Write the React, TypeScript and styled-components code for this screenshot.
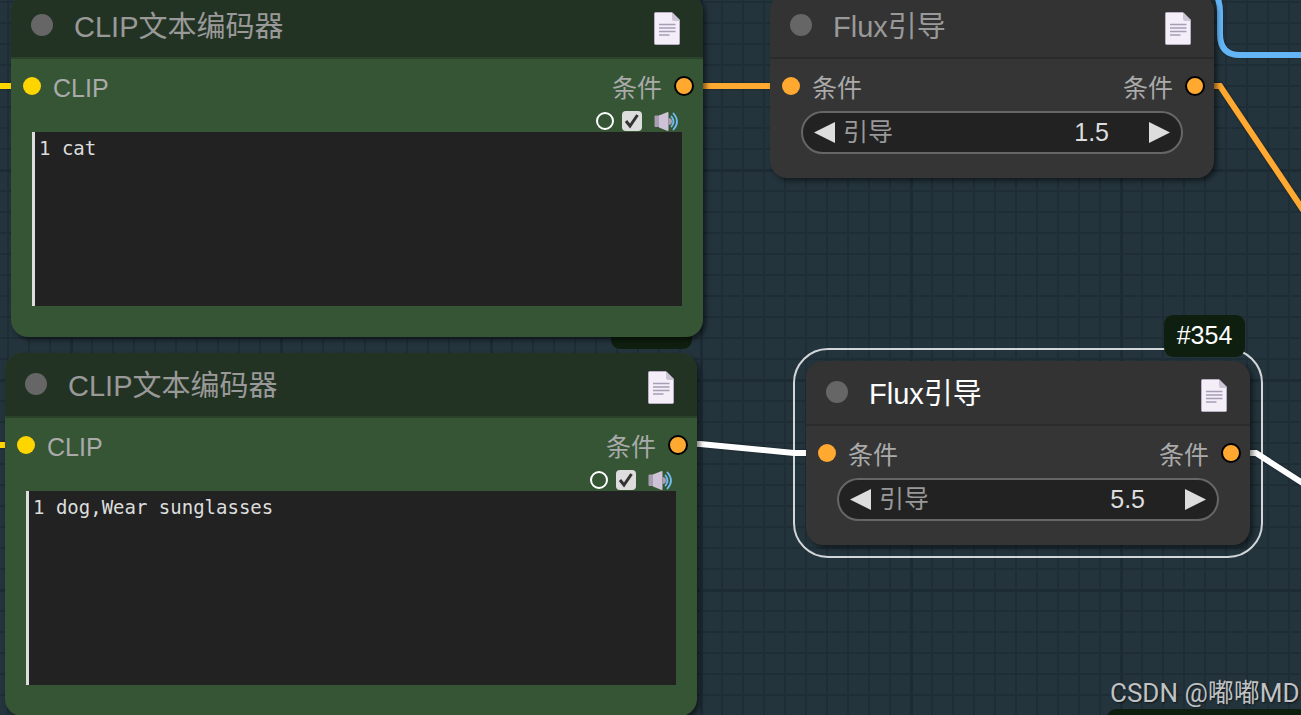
import React, { useId, useState } from "react";
import styled, { createGlobalStyle, css } from "styled-components";

const GlobalStyle = createGlobalStyle`
  *, *::before, *::after { box-sizing: border-box; }
  body {
    margin: 0;
    background: #24333d;
    font-family: "Liberation Sans", "Noto Sans CJK SC", sans-serif;
  }
  button, input, textarea { font: inherit; margin: 0; }
`;

const Canvas = styled.main`
  position: relative;
  min-height: 100vh;
  overflow: hidden;
  background-color: #24343d;
  background-image:
    linear-gradient(90deg, #1c2b34 3px, transparent 3px),
    linear-gradient(#1c2b34 3px, transparent 3px),
    linear-gradient(90deg, #1e2d36 2px, transparent 2px),
    linear-gradient(#1e2d36 2px, transparent 2px);
  background-size: 210px 210px, 210px 210px, 21px 21px, 21px 21px;
  background-position: 70px 0, 0 169px, 7px 0, 0 1px;
`;

const Wires = styled.svg`
  position: absolute;
  inset: 0;
  width: 100%;
  height: 100%;
  fill: none;
  stroke-width: 6px;
  filter: drop-shadow(0 0 1px rgba(0, 0, 0, 0.4));
`;

type Tone = "green" | "gray";

const tones = {
  green: { head: "#233323", body: "#355535", line: "#2b432b" },
  gray: { head: "#333333", body: "#353535", line: "#2b2b2b" },
};

const NodeBox = styled.section<{ $x: number; $y: number; $w: number; $tone: Tone; $selected?: boolean; $raised?: boolean }>`
  position: absolute;
  left: ${(p) => p.$x}px;
  top: ${(p) => p.$y}px;
  width: ${(p) => p.$w}px;
  z-index: ${(p) => (p.$raised ? 2 : 1)};
  border-radius: 17px;
  background: ${(p) => tones[p.$tone].body};
  box-shadow: 3px 3px 5px rgba(0, 0, 0, 0.5);
  ${(p) =>
    p.$selected &&
    css`
      &::before {
        content: "";
        position: absolute;
        inset: -13px;
        border: 2px solid rgba(255, 255, 255, 0.8);
        border-radius: 35px;
        pointer-events: none;
      }
    `}
`;

const Header = styled.header<{ $tone: Tone }>`
  display: flex;
  align-items: center;
  gap: 21px;
  height: 65px;
  padding: 0 23px 1px 20px;
  border-radius: 17px 17px 0 0;
  border-bottom: 2px solid ${(p) => tones[p.$tone].line};
  background: ${(p) => tones[p.$tone].head};
`;

const CollapseDot = styled.button`
  width: 22px;
  height: 22px;
  padding: 0;
  border: 0;
  border-radius: 50%;
  background: #666;
`;

const Title = styled.h2<{ $selected?: boolean }>`
  flex: 1;
  margin: 0;
  padding-top: 3px;
  font-size: 29px;
  line-height: 40px;
  font-weight: 400;
  color: ${(p) => (p.$selected ? "#fff" : "#999")};
`;

const IconButton = styled.button`
  display: flex;
  padding: 0;
  border: 0;
  background: none;
`;

const DocButton = styled(IconButton)`
  padding-top: 6px;
`;

const Badge = styled.span<{ $width?: number }>`
  display: flex;
  align-items: center;
  justify-content: center;
  width: ${(p) => p.$width ?? 81}px;
  height: 42px;
  padding-bottom: 2px;
  border-radius: 9px;
  background: #0f1f0f;
  color: #fff;
  font-size: 25px;
  line-height: 30px;
`;

const NodeBadge = styled(Badge)`
  position: absolute;
  right: 5px;
  top: -46px;
`;

const EdgeBadge = styled(Badge)`
  position: absolute;
  left: 1107px;
  top: 709px;
`;

const Slots = styled.div`
  display: flex;
  align-items: center;
  justify-content: space-between;
  height: 49px;
  padding: 5px 9px 0 12px;
`;

const Slot = styled.div`
  display: flex;
  align-items: center;
  gap: 12px;
  color: #aaa;
  font-size: 25px;
  line-height: 30px;
`;

const SlotName = styled.span`
  padding-top: 4px;
`;

const Port = styled.i<{ $color: string; $out?: boolean }>`
  width: ${(p) => (p.$out ? 20 : 18)}px;
  height: ${(p) => (p.$out ? 20 : 18)}px;
  border: ${(p) => (p.$out ? "2px solid #000" : "0")};
  border-radius: 50%;
  background: ${(p) => p.$color};
`;

const PromptBody = styled.div`
  padding: 0 21px 31px;
`;

const Tools = styled.div`
  display: flex;
  align-items: center;
  justify-content: flex-end;
  gap: 8px;
  height: 24px;
  padding: 1px 3px 0 0;
`;

const Radio = styled.input`
  appearance: none;
  width: 18px;
  height: 18px;
  border: 2px solid #fff;
  border-radius: 50%;
`;

const Tick = styled.label`
  display: grid;
  width: 20px;
  height: 20px;
  & > * {
    grid-area: 1 / 1;
  }
`;

const TickInput = styled.input`
  appearance: none;
  width: 20px;
  height: 20px;
  border-radius: 4px;
  background: #ddd;
  &:not(:checked) + svg {
    visibility: hidden;
  }
`;

const Prompt = styled.textarea<{ $height: number }>`
  display: block;
  width: 100%;
  height: ${(p) => p.$height}px;
  padding: 4px;
  border: 0;
  border-left: 3px solid #ddd;
  outline: 0;
  resize: none;
  background: #222;
  color: #ddd;
  font-family: "DejaVu Sans Mono", "Noto Sans CJK SC", monospace;
  font-size: 19px;
  line-height: 24px;
`;

const WidgetBody = styled.div`
  padding: 3px 31px 24px;
`;

const NumberWidget = styled.div`
  display: flex;
  align-items: center;
  height: 43px;
  padding: 0 11px;
  border: 2px solid #666;
  border-radius: 22px;
  background: #222;
  font-size: 25px;
  line-height: 30px;
`;

const WidgetLabel = styled.label`
  padding: 0 0 2px 8px;
  color: #999;
`;

const WidgetValue = styled.input`
  flex: 1;
  min-width: 0;
  padding: 0 0 2px;
  margin-right: 40px;
  border: 0;
  outline: 0;
  background: none;
  color: #ddd;
  text-align: right;
`;

const Watermark = styled.p`
  position: absolute;
  left: 1110px;
  top: 677px;
  z-index: 3;
  margin: 0;
  white-space: nowrap;
  color: #c0c2c4;
  font-family: Roboto, "Noto Sans CJK SC", sans-serif;
  font-size: 26px;
  line-height: 32px;
  text-shadow: 1px 1px 2px rgba(0, 0, 0, 0.6);
`;

const DocIcon = () => (
  <svg width="26" height="33" viewBox="0 0 26 33" aria-hidden="true">
    <path d="M1.5.5H18L25.500 8V31.500a1 1 0 0 1-1 1h-23a1 1 0 0 1-1-1V1.500a1 1 0 0 1 1-1Z" fill="#f3eef8" stroke="#b9afc4" />
    <path d="M18 .5 25.500 8v1H20a2 2 0 0 1-2-2Z" fill="#cdc4d6" />
    <path d="M5 12.500h16.500M5 16h16.500M5 19.500h16.500M5 23h10.500" stroke="#a79db5" strokeWidth="1.500" />
  </svg>
);

const SpeakerIcon = () => (
  <svg width="29" height="20" viewBox="0 0 29 20" fill="none" aria-hidden="true">
    <path d="M5.500 4.500H10v11.500H5.500a1 1 0 0 1-1-1v-9.500a1 1 0 0 1 1-1Z" fill="#a99db3" />
    <path d="M9 4.500 17 1.200a1 1 0 0 1 1.500 1v16.600a1 1 0 0 1-1.500 1L9 16.500Z" fill="#cdc2d6" />
    <path d="M18.500 7a3.500 3.500 0 0 1 0 7Z" fill="#a99db3" />
    <path d="M21.500 5.500q4 5 0 10" stroke="#6fbcf0" strokeWidth="1.800" strokeLinecap="round" />
    <path d="M23.500 2.500q7 8 0 16" stroke="#6fbcf0" strokeWidth="1.800" strokeLinecap="round" />
  </svg>
);

const CheckMark = () => (
  <svg width="20" height="20" viewBox="0 0 20 20" fill="none" aria-hidden="true">
    <path d="m4 10 4 5 7.500-11" stroke="#333" strokeWidth="3" />
  </svg>
);

const Arrow = ({ right }: { right?: boolean }) => (
  <svg width="21" height="21" viewBox="0 0 21 21" fill="#ddd" aria-hidden="true">
    <path d={right ? "M0 0 21 10.500 0 21Z" : "M21 0 0 10.500 21 21Z"} />
  </svg>
);

const ORANGE = "#ffa931";
const YELLOW = "#ffd500";

interface HeadProps {
  tone: Tone;
  title: string;
  selected?: boolean;
}

const NodeHeader = ({ tone, title, selected }: HeadProps) => (
  <Header $tone={tone}>
    <CollapseDot type="button" aria-label="折叠" />
    <Title $selected={selected}>{title}</Title>
    <DocButton type="button" aria-label="文档">
      <DocIcon />
    </DocButton>
  </Header>
);

const SlotRow = ({ input, color }: { input: string; color: string }) => (
  <Slots>
    <Slot>
      <Port $color={color} />
      <SlotName>{input}</SlotName>
    </Slot>
    <Slot>
      <SlotName>条件</SlotName>
      <Port $color={ORANGE} $out />
    </Slot>
  </Slots>
);

interface PromptNodeProps {
  x: number;
  y: number;
  text: string;
  height: number;
  raised?: boolean;
}

const PromptNode = ({ x, y, text, height, raised }: PromptNodeProps) => {
  const [value, setValue] = useState(text);
  return (
    <NodeBox $x={x} $y={y} $w={692} $tone="green" $raised={raised}>
      {!raised && <NodeBadge />}
      <NodeHeader tone="green" title="CLIP文本编码器" />
      <SlotRow input="CLIP" color={YELLOW} />
      <PromptBody>
        <Tools>
          <Radio type="radio" aria-label="状态" />
          <Tick>
            <TickInput type="checkbox" defaultChecked aria-label="启用" />
            <CheckMark />
          </Tick>
          <IconButton type="button" aria-label="朗读">
            <SpeakerIcon />
          </IconButton>
        </Tools>
        <Prompt
          $height={height}
          aria-label="文本"
          spellCheck={false}
          value={value}
          onChange={(e) => setValue(e.target.value)}
        />
      </PromptBody>
    </NodeBox>
  );
};

interface FluxNodeProps {
  x: number;
  y: number;
  guidance: number;
  badge?: string;
  selected?: boolean;
}

const FluxNode = ({ x, y, guidance, badge, selected }: FluxNodeProps) => {
  const id = useId();
  const [value, setValue] = useState(guidance);
  const step = (d: number) => setValue((v) => Math.round((v + d) * 10) / 10);
  return (
    <NodeBox $x={x} $y={y} $w={444} $tone="gray" $selected={selected}>
      {badge && <NodeBadge>{badge}</NodeBadge>}
      <NodeHeader tone="gray" title="Flux引导" selected={selected} />
      <SlotRow input="条件" color={ORANGE} />
      <WidgetBody>
        <NumberWidget>
          <IconButton type="button" aria-label="减小" onClick={() => step(-0.1)}>
            <Arrow />
          </IconButton>
          <WidgetLabel htmlFor={id}>引导</WidgetLabel>
          <WidgetValue id={id} value={value.toFixed(1)} onChange={(e) => setValue(Number(e.target.value) || 0)} />
          <IconButton type="button" aria-label="增大" onClick={() => step(0.1)}>
            <Arrow right />
          </IconButton>
        </NumberWidget>
      </WidgetBody>
    </NodeBox>
  );
};

export default function App() {
  return (
    <>
      <GlobalStyle />
      <Canvas>
        <Wires aria-hidden="true">
          <path d="M-10 86H31" stroke={YELLOW} />
          <path d="M-10 445H26" stroke={YELLOW} />
          <path d="M684 86H791" stroke={ORANGE} />
          <path d="M1195 86H1220L1342 268" stroke={ORANGE} />
          <path d="M678 444H700L794 453H827" stroke="#fff" />
          <path d="M1231 453H1256L1346 511" stroke="#fff" />
          <path d="M1214 -10Q1220 0 1220 12V34Q1220 55 1240 55H2400" stroke="#64b5f6" />
        </Wires>
        <PromptNode x={11} y={-6} text="1 cat" height={174} raised />
        <PromptNode x={5} y={353} text="1 dog,Wear sunglasses" height={194} />
        <FluxNode x={770} y={-6} guidance={1.5} />
        <FluxNode x={806} y={361} guidance={5.5} badge="#354" selected />
        <EdgeBadge $width={220} />
        <Watermark>CSDN @嘟嘟MD</Watermark>
      </Canvas>
    </>
  );
}
